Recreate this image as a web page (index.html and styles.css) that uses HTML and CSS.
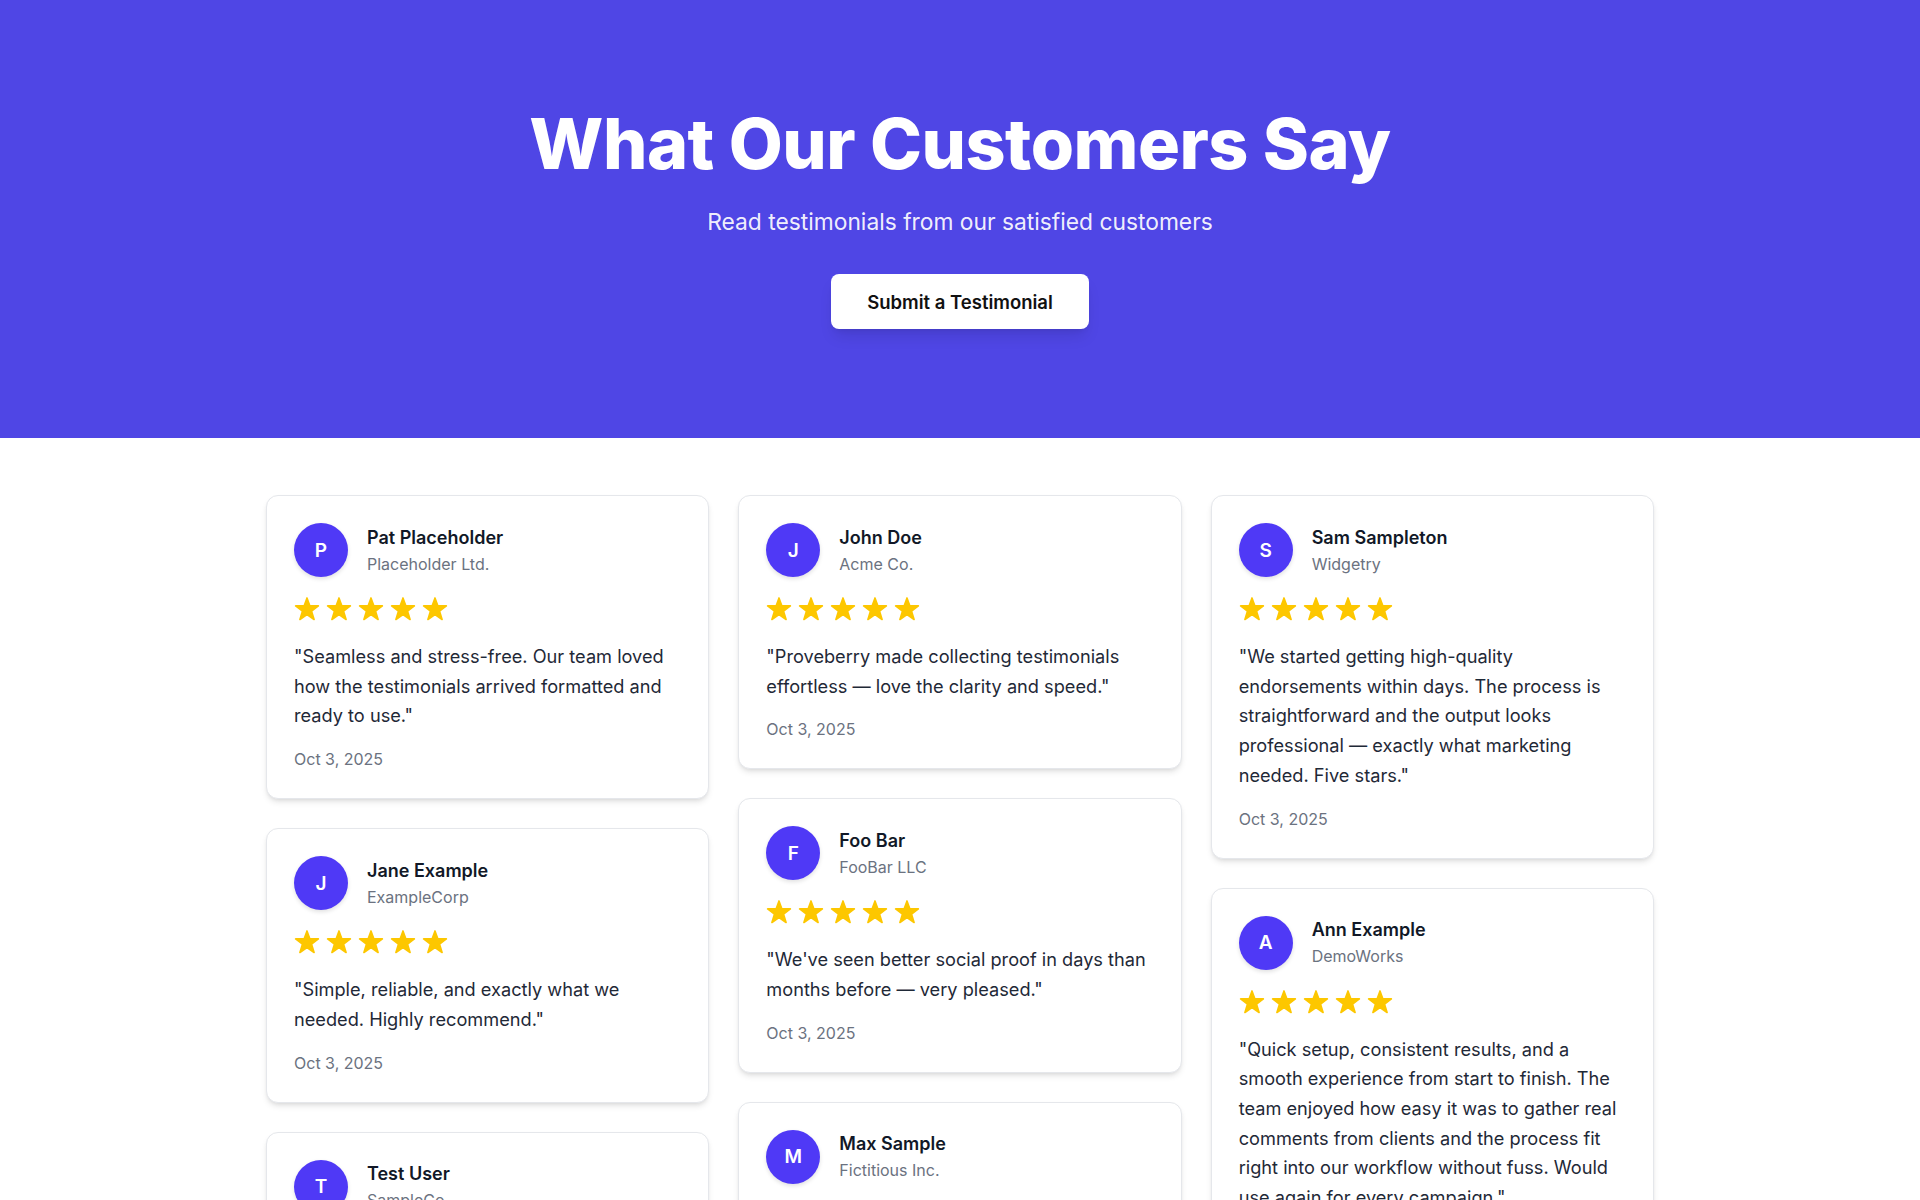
FILE: index.html
```html
<!DOCTYPE html>
<html lang="en">
<head>
<meta charset="utf-8">
<title>What Our Customers Say</title>
<link rel="stylesheet" href="styles.css">
</head>
<body>
<svg width="0" height="0" class="defs" aria-hidden="true">
  <defs>
    <symbol id="star" viewBox="0 0 26 24">
      <polygon points="13,0.9 15.83,8.81 24.4,8.9 17.57,14.19 20.1,22.5 13,17.51 5.9,22.5 8.43,14.19 1.6,8.9 10.17,8.81" fill="#fdc700" stroke="#fdc700" stroke-width="1.6" stroke-linejoin="round"/>
    </symbol>
  </defs>
</svg>

<header class="hero">
  <h1 class="hero-title">What Our Customers Say</h1>
  <p class="hero-sub">Read testimonials from our satisfied customers</p>
  <button class="hero-btn" type="button">Submit a Testimonial</button>
</header>

<main class="wall">
  <div class="col">
    <article class="card">
      <div class="card-head">
        <div class="avatar">P</div>
        <div class="who"><div class="name">Pat Placeholder</div><div class="company">Placeholder Ltd.</div></div>
      </div>
      <div class="stars"><svg><use href="#star"/></svg><svg><use href="#star"/></svg><svg><use href="#star"/></svg><svg><use href="#star"/></svg><svg><use href="#star"/></svg></div>
      <p class="quote">"Seamless and stress-free. Our team loved how the testimonials arrived formatted and ready to use."</p>
      <div class="date">Oct 3, 2025</div>
    </article>
    <article class="card">
      <div class="card-head">
        <div class="avatar">J</div>
        <div class="who"><div class="name">Jane Example</div><div class="company">ExampleCorp</div></div>
      </div>
      <div class="stars"><svg><use href="#star"/></svg><svg><use href="#star"/></svg><svg><use href="#star"/></svg><svg><use href="#star"/></svg><svg><use href="#star"/></svg></div>
      <p class="quote">"Simple, reliable, and exactly what we needed. Highly recommend."</p>
      <div class="date">Oct 3, 2025</div>
    </article>
    <article class="card">
      <div class="card-head">
        <div class="avatar">T</div>
        <div class="who"><div class="name">Test User</div><div class="company">SampleCo</div></div>
      </div>
      <div class="stars"><svg><use href="#star"/></svg><svg><use href="#star"/></svg><svg><use href="#star"/></svg><svg><use href="#star"/></svg><svg><use href="#star"/></svg></div>
      <p class="quote">"Great tool for gathering feedback quickly. Our customers found it easy to use."</p>
      <div class="date">Oct 3, 2025</div>
    </article>
  </div>

  <div class="col">
    <article class="card">
      <div class="card-head">
        <div class="avatar">J</div>
        <div class="who"><div class="name">John Doe</div><div class="company">Acme Co.</div></div>
      </div>
      <div class="stars"><svg><use href="#star"/></svg><svg><use href="#star"/></svg><svg><use href="#star"/></svg><svg><use href="#star"/></svg><svg><use href="#star"/></svg></div>
      <p class="quote">"Proveberry made collecting testimonials effortless — love the clarity and speed."</p>
      <div class="date">Oct 3, 2025</div>
    </article>
    <article class="card">
      <div class="card-head">
        <div class="avatar">F</div>
        <div class="who"><div class="name">Foo Bar</div><div class="company">FooBar LLC</div></div>
      </div>
      <div class="stars"><svg><use href="#star"/></svg><svg><use href="#star"/></svg><svg><use href="#star"/></svg><svg><use href="#star"/></svg><svg><use href="#star"/></svg></div>
      <p class="quote">"We've seen better social proof in days than months before — very pleased."</p>
      <div class="date">Oct 3, 2025</div>
    </article>
    <article class="card">
      <div class="card-head">
        <div class="avatar">M</div>
        <div class="who"><div class="name">Max Sample</div><div class="company">Fictitious Inc.</div></div>
      </div>
      <div class="stars"><svg><use href="#star"/></svg><svg><use href="#star"/></svg><svg><use href="#star"/></svg><svg><use href="#star"/></svg><svg><use href="#star"/></svg></div>
      <p class="quote">"Easy to set up and the results speak for themselves. Our landing page converts better."</p>
      <div class="date">Oct 3, 2025</div>
    </article>
  </div>

  <div class="col">
    <article class="card">
      <div class="card-head">
        <div class="avatar">S</div>
        <div class="who"><div class="name">Sam Sampleton</div><div class="company">Widgetry</div></div>
      </div>
      <div class="stars"><svg><use href="#star"/></svg><svg><use href="#star"/></svg><svg><use href="#star"/></svg><svg><use href="#star"/></svg><svg><use href="#star"/></svg></div>
      <p class="quote">"We started getting high-quality endorsements within days. The process is straightforward and the output looks professional — exactly what marketing needed. Five stars."</p>
      <div class="date">Oct 3, 2025</div>
    </article>
    <article class="card">
      <div class="card-head">
        <div class="avatar">A</div>
        <div class="who"><div class="name">Ann Example</div><div class="company">DemoWorks</div></div>
      </div>
      <div class="stars"><svg><use href="#star"/></svg><svg><use href="#star"/></svg><svg><use href="#star"/></svg><svg><use href="#star"/></svg><svg><use href="#star"/></svg></div>
      <p class="quote">"Quick setup, consistent results, and a smooth experience from start to finish. The team enjoyed how easy it was to gather real comments from clients and the process fit right into our workflow without fuss. Would use again for every campaign."</p>
      <div class="date">Oct 3, 2025</div>
    </article>
  </div>
</main>
</body>
</html>
```
FILE: styles.css
```css
* { box-sizing: border-box; }

html, body {
  margin: 0;
  padding: 0;
  background: #ffffff;
  font-family: Inter, "Noto Sans", "Liberation Sans", sans-serif;
  color: #1f2937;
}

.defs { position: absolute; width: 0; height: 0; overflow: hidden; }

.hero {
  background: #4f46e5;
  height: 438px;
  padding-top: 105px;
  display: flex;
  flex-direction: column;
  align-items: center;
  text-align: center;
}

.hero-title {
  margin: 0;
  font-size: 70px;
  line-height: 78px;
  font-weight: 800;
  letter-spacing: -0.5px;
  color: #ffffff;
}

.hero-sub {
  margin: 24px 0 0;
  font-size: 22.8px;
  line-height: 30px;
  font-weight: 400;
  color: rgba(255, 255, 255, 0.93);
}

.hero-btn {
  margin-top: 37px;
  height: 55px;
  width: 258px;
  border: 0;
  border-radius: 8px;
  background: #ffffff;
  color: #111111;
  font-family: inherit;
  font-size: 18.5px;
  font-weight: 600;
  box-shadow: 0 10px 15px -3px rgba(0, 0, 0, 0.1), 0 4px 6px -4px rgba(0, 0, 0, 0.1);
  cursor: pointer;
}

.wall {
  width: 1388px;
  margin: 57px auto 0;
  display: grid;
  grid-template-columns: repeat(3, 1fr);
  column-gap: 29px;
  align-items: start;
}

.col {
  display: flex;
  flex-direction: column;
  gap: 29px;
}

.card {
  background: #ffffff;
  border: 1px solid #e5e7eb;
  border-radius: 12px;
  padding: 27px;
  box-shadow: 0 4px 6px -1px rgba(0, 0, 0, 0.1), 0 2px 4px -2px rgba(0, 0, 0, 0.1);
}

.card-head {
  display: flex;
  align-items: center;
  gap: 19px;
}

.avatar {
  width: 54px;
  height: 54px;
  flex: none;
  border-radius: 50%;
  background: #4f39f6;
  color: #ffffff;
  display: flex;
  align-items: center;
  justify-content: center;
  font-size: 19px;
  font-weight: 600;
  box-shadow: 0 2px 4px rgba(0, 0, 0, 0.12);
}

.who { display: flex; flex-direction: column; }

.name {
  font-size: 18px;
  line-height: 26px;
  font-weight: 600;
  color: #111827;
}

.company {
  margin-top: 2px;
  font-size: 16px;
  line-height: 23px;
  color: #6b7280;
}

.stars {
  margin-top: 20px;
  display: flex;
  gap: 6px;
  height: 24px;
}

.stars svg {
  width: 26px;
  height: 24px;
  display: block;
}

.quote {
  margin: 21px 0 0;
  font-size: 18.2px;
  line-height: 29.7px;
  color: #1f2937;
}

.date {
  margin-top: 16px;
  font-size: 16px;
  line-height: 24px;
  color: #6b7280;
}
```
